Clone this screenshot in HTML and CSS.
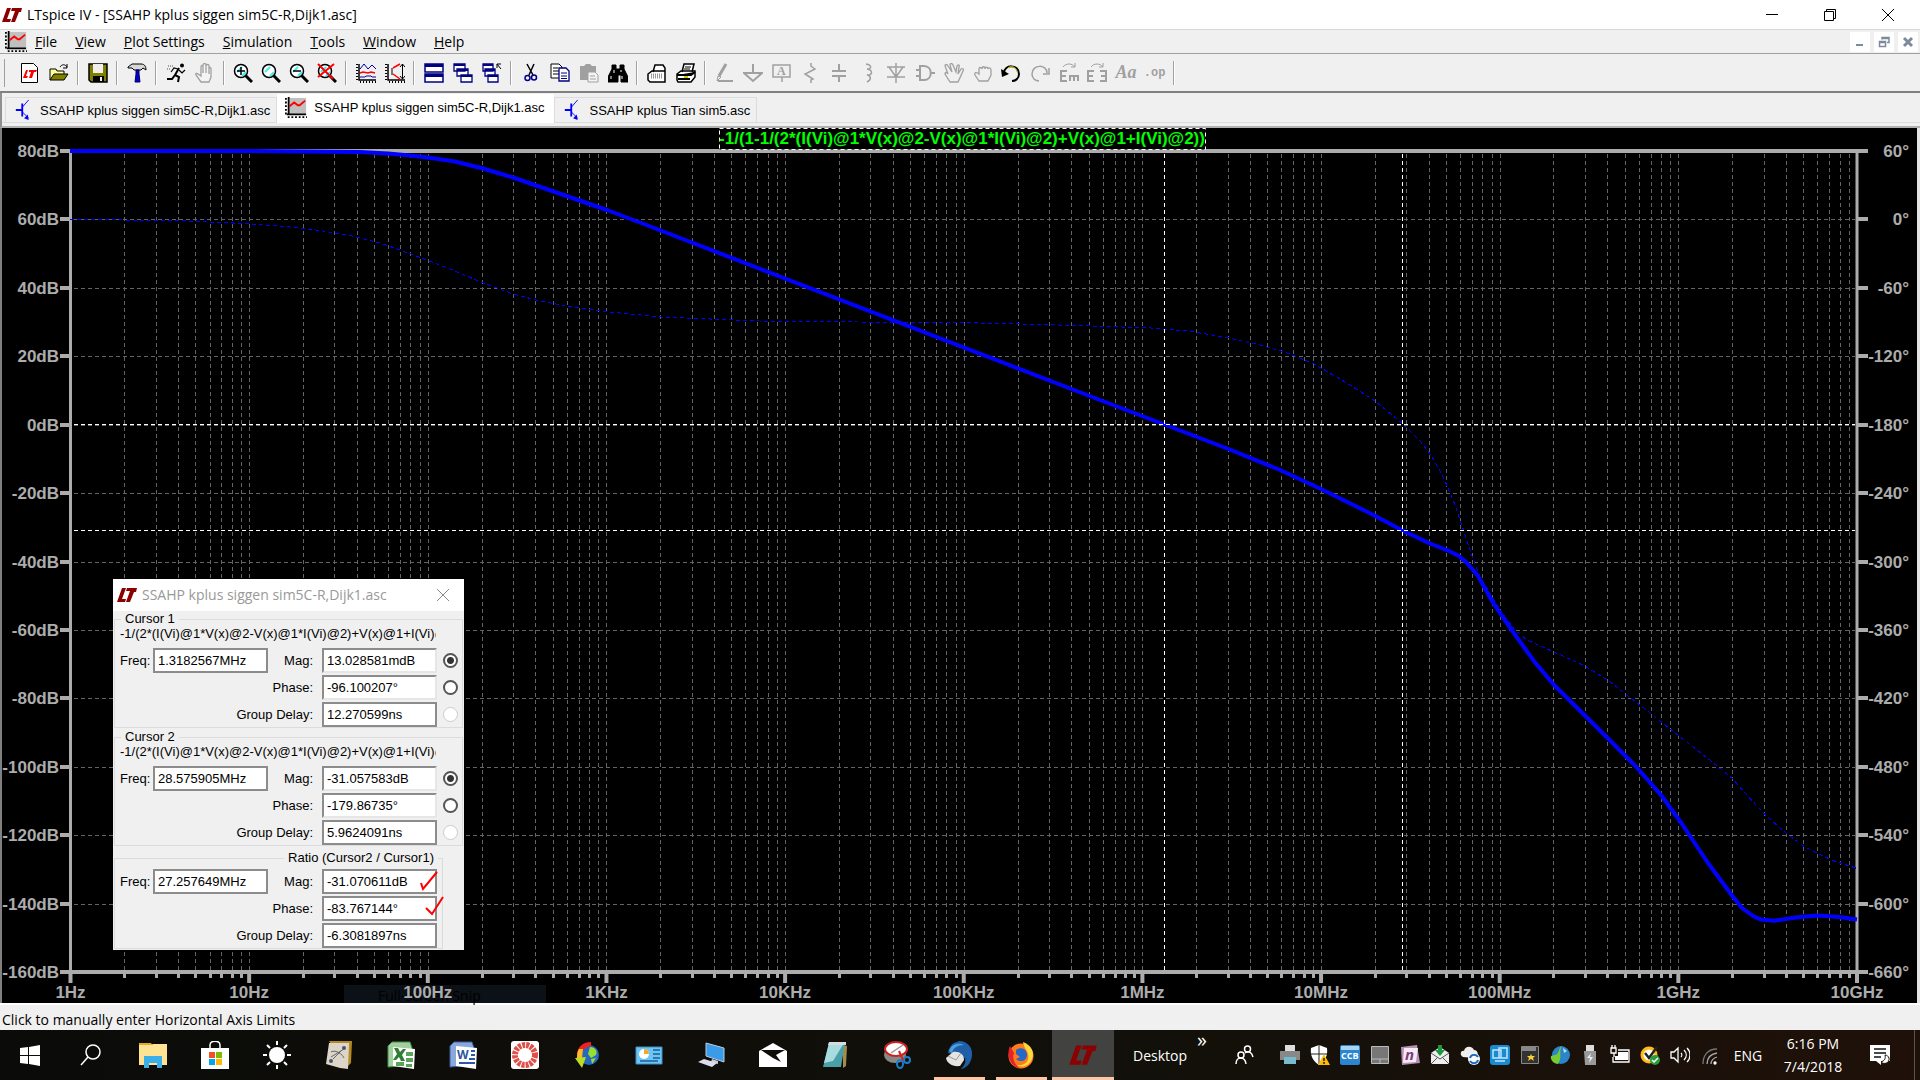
FILE: index.html
```html
<!DOCTYPE html>
<html lang="en">
<head>
<meta charset="utf-8">
<title>LTspice IV - [SSAHP kplus siggen sim5C-R,Dijk1.asc]</title>
<link rel="stylesheet" href="styles.css">
</head>
<body>
<svg class="defs" aria-hidden="true">
  <symbol id="lt" viewBox="0 0 20 16"><path fill="#8b0000" d="M5 1h4L5 12h4l-1 3H0zM10 1h10l-1 4h-2l-4 10H9l4-11H9z"/></symbol>
  <symbol id="wave" viewBox="0 0 24 24"><path fill="#c0c0c0" d="M5 1h18v18H5z"/><path stroke="#000" stroke-width="2" d="M4 0v20M2 19h21"/><path stroke="#000" stroke-width="2" stroke-dasharray="2 2" d="M1 1v20M3 22h21"/><path fill="none" stroke="#f00" stroke-width="2" d="M5 10l5-4 4 3h2l6-5"/></symbol>
  <symbol id="bjt" viewBox="0 0 20 24"><path fill="none" stroke="#00f" stroke-width="2" d="M0 12h7M7 5v14"/><path fill="none" stroke="#00f" d="M7 9l7-8M7 14l7 7"/><path fill="#00f" d="M14 23l-5-2 4-4z"/></symbol>
  <symbol id="lens" viewBox="0 0 20 20"><path d="M12 12l7 7" stroke="#000" stroke-width="3"/><circle cx="8" cy="8" r="6.500" fill="#fff" stroke="#000" stroke-width="1.500"/><path d="M4 9l5-5M9 13l4-4" stroke="#4ee" stroke-width="2"/></symbol>
  <symbol id="hand" viewBox="0 0 20 20"><path fill="#f4f4f4" stroke="#a0a0a0" stroke-width="1.300" d="M6 19l-5-7c-1-2 1-2 2-1l3 2V4c0-2 2-2 2 0v6V2c0-2 3-2 3 0v8V3c0-2 3-2 3 0v8V6c0-2 2-2 2 0v8l-2 5z"/></symbol>
</svg>

<header class="titlebar">
  <svg class="ico-title"><use href="#lt"/></svg>
  <h1>LTspice IV - [SSAHP kplus siggen sim5C-R,Dijk1.asc]</h1>
  <div class="winbtns">
    <button aria-label="Minimize"><svg viewBox="0 0 12 12"><path d="M0 5.500h12"/></svg></button>
    <button aria-label="Restore"><svg viewBox="0 0 12 12"><path d="M.5 2.500h9v9h-9zM2.500 2V.5h9v9H10"/></svg></button>
    <button aria-label="Close"><svg viewBox="0 0 12 12"><path d="M0 0l12 12M12 0L0 12"/></svg></button>
  </div>
</header>

<nav class="menubar">
  <svg class="ico-menu"><use href="#wave"/></svg>
  <button><u>F</u>ile</button><button><u>V</u>iew</button><button><u>P</u>lot Settings</button><button><u>S</u>imulation</button><button><u>T</u>ools</button><button><u>W</u>indow</button><button><u>H</u>elp</button>
  <div class="mdibtns">
    <button aria-label="Minimize document"><svg viewBox="0 0 12 12"><path stroke-width="2" d="M2 9h7"/></svg></button>
    <button aria-label="Restore document"><svg viewBox="0 0 12 12"><path d="M1.500 5.500h6v5h-6zM1 6.500h7M4 3.500V1.500h7v5H9M4 2.500h7"/></svg></button>
    <button aria-label="Close document"><svg viewBox="0 0 12 12"><path stroke-width="3" d="M2 2l8 8M10 2l-8 8"/></svg></button>
  </div>
</nav>

<div class="toolbar">
  <div class="tools">
    <button aria-label="New schematic"><svg viewBox="0 0 20 20"><path fill="#fff" stroke="#000" d="M1.500 .5h12l4 4v15h-16z"/><path fill="#f00" d="M6 7h2l-2 6h2l-1 2H3zM9 7h8l-1 2h-2l-2 6H9l2-6H9z"/></svg></button>
    <button aria-label="Open"><svg viewBox="0 0 20 20"><path fill="#ff9" stroke="#000" d="M1 17V6h6l1 2h7v3"/><path fill="#808000" stroke="#000" d="M1 17l4-6h14l-4 6z"/><path fill="none" stroke="#000" d="M11 4c2-3 5-3 7 0M18 1v4h-4"/></svg></button>
  </div><i></i>
  <div class="tools">
    <button aria-label="Save"><svg viewBox="0 0 20 20"><path fill="#808000" stroke="#000" stroke-width="1.500" d="M1 1h18v18H3l-2-2z"/><path fill="#efefef" d="M5 1h10v9H5z"/><path d="M5 13h11v6H5z"/><path fill="#efefef" d="M12 14h2v4h-2z"/></svg></button>
  </div><i></i>
  <div class="tools">
    <button aria-label="Control panel"><svg viewBox="0 0 20 20"><path fill="#d8d8d8" stroke="#000" d="M1 4l4-3h9c4 0 5 3 5 6l-3-2-2 2H7L5 5H1z"/><path fill="#00c" stroke="#006" d="M9 7h3v4l1 8H8l1-8z"/></svg></button>
  </div><i></i>
  <div class="tools">
    <button aria-label="Run"><svg viewBox="0 0 20 20"><circle cx="16" cy="2.500" r="2"/><path fill="none" stroke="#000" stroke-width="2" d="M13 5l-4 7 4 2-1 5M9 12l-3 4H1"/><path fill="none" stroke="#000" stroke-width="1.200" d="M12 6L8 5 5 9M13 7l3 3 3-3"/><path stroke="#555" stroke-dasharray="1 1" d="M2 3h6M1 6h4"/></svg></button>
    <button aria-label="Halt"><svg><use href="#hand"/></svg></button>
  </div><i></i>
  <div class="tools tools-tight">
    <button aria-label="Zoom in"><svg viewBox="0 0 20 20"><use href="#lens"/><path stroke="#000" stroke-width="1.500" d="M8 4v8M4 8h8"/></svg></button>
    <button aria-label="Pan"><svg><use href="#lens"/></svg></button>
    <button aria-label="Zoom out"><svg viewBox="0 0 20 20"><use href="#lens"/><path stroke="#000" stroke-width="1.500" d="M4 8h8"/></svg></button>
    <button aria-label="Zoom fit"><svg viewBox="0 0 20 20"><use href="#lens"/><path stroke="#f00" stroke-width="2" d="M1 1l15 15M17 1L1 14"/></svg></button>
  </div><i></i>
  <div class="tools">
    <button aria-label="Plot panes"><svg viewBox="0 0 20 20" fill="none"><path stroke="#000" stroke-width="1.500" d="M3 1v16h17"/><path stroke="#000" stroke-dasharray="1 2" stroke-width="2" d="M1 1v16M4 19h16"/><path stroke="#00a" d="M4 6l4-5 4 5 4-4 4 4M4 14h5l1-1h5l1 1h4"/><path stroke="#f00" stroke-width="1.500" d="M4 10l3-1 5 1 3-1 4 1"/></svg></button>
    <button aria-label="Autorange"><svg viewBox="0 0 20 20" fill="none"><path stroke="#000" stroke-width="1.500" d="M3 1v16h17"/><path stroke="#000" stroke-dasharray="1 2" stroke-width="2" d="M1 1v16M4 19h16"/><path stroke="#f00" stroke-width="1.500" d="M15 1L8 5M8 11l7 5"/><path stroke="#000" d="M17.500 1v15M15 4l2.500-3L20 4M15 13l2.500 3 2.500-3M7 5v7"/></svg></button>
  </div><i></i>
  <div class="tools">
    <button aria-label="Tile"><svg viewBox="0 0 20 20"><path fill="#fff" stroke="#000080" stroke-width="1.500" d="M1 1h18v8H1zM1 11h18v8H1z"/><path fill="#000080" d="M1 1h18v3H1zM1 11h18v3H1z"/></svg></button>
    <button aria-label="Cascade"><svg viewBox="0 0 20 20"><g fill="#fff" stroke="#000080" stroke-width="1.300"><path d="M1 1h11v7H1zM4 6h11v7H4zM8 12h11v7H8z"/><path stroke-width="2" d="M1 2h11M4 7h11M8 13h11"/></g></svg></button>
    <button aria-label="Close all"><svg viewBox="0 0 20 20"><g fill="#fff" stroke="#000080" stroke-width="1.300"><path d="M1 1h10v7H1zM3 6h10v7H3zM6 12h10v7H6z"/><path stroke-width="2" d="M1 2h10M3 7h10M6 13h10"/></g><path fill="none" stroke="#000" d="M19 6l-4-5M15 5V1h4"/></svg></button>
  </div><i></i>
  <div class="tools">
    <button aria-label="Cut"><svg viewBox="0 0 20 20"><path stroke="#000" stroke-width="1.500" d="M6 1l6 11M13 1L8 12"/><g fill="none" stroke="#00008b" stroke-width="1.500"><circle cx="6.500" cy="15" r="2.500"/><circle cx="13" cy="14.500" r="2.500"/></g></svg></button>
    <button aria-label="Copy"><svg viewBox="0 0 20 20"><path fill="#fff" stroke="#000" d="M1 1h8l3 3v11H1z"/><path stroke="#000" d="M3 5h5M3 8h6M3 11h6"/><path fill="#fff" stroke="#000080" stroke-width="1.300" d="M9 5h7l3 3v10H9z"/><path stroke="#000080" d="M11 10h6M11 13h6M11 15.500h6"/></svg></button>
    <button aria-label="Paste"><svg viewBox="0 0 20 20"><path fill="#a0a0a0" d="M1 3h4l2-2h4l2 2h4v14H1z"/><path fill="#f4f4f4" stroke="#a0a0a0" d="M9 9h7l3 3v7H9z"/><path stroke="#a0a0a0" d="M11 13h5M11 16h6"/></svg></button>
    <button aria-label="Find"><svg viewBox="0 0 20 20"><path d="M4 2h4v4h4V2h4v4l4 8v5h-7v-7h-3v7H0v-5l4-8z" stroke="#000"/><path stroke="#fff" d="M3 13v3M14 13v3M6 7v3M13 7v2"/></svg></button>
  </div><i></i>
  <div class="tools">
    <button aria-label="Print setup"><svg viewBox="0 0 20 20"><path fill="#fff" stroke="#000" stroke-width="1.500" d="M6 9l2-7h8l2 3v5M1 11l4-3h13v11H3l-2-2z"/><path stroke="#999" stroke-dasharray="1 1" stroke-width="5" d="M4 13h12"/></svg></button>
    <button aria-label="Print"><svg viewBox="0 0 20 20"><path fill="#fff" stroke="#000" stroke-width="1.500" d="M6 9l2-8h10l-2 8M1 11l4-3h14v6l-4 5H2l-1-2z"/><path stroke="#000" d="M9 4h6M8 6h6"/><path stroke="#000" stroke-width="2" d="M1 12h14l4-3M2 16h12"/><path stroke="#cc0" stroke-width="2" d="M8 14h4"/></svg></button>
  </div><i></i>
  <div class="tools tools-edit">
    <button disabled aria-label="Wire"><svg viewBox="0 0 20 20"><path stroke-width="3" d="M12 1L5 13"/><path d="M3 18l1-5 3 1z"/><path stroke-width="2" d="M4 18h15"/></svg></button>
    <button disabled aria-label="Ground"><svg viewBox="0 0 20 20"><path stroke-width="2" d="M10 1v9M1 10h18l-9 8z"/></svg></button>
    <button disabled aria-label="Label net"><svg viewBox="0 0 20 20"><path d="M1 2h17v12H1zM10 14v5" stroke-width="1.500"/><text x="5" y="12">A</text></svg></button>
    <button disabled aria-label="Resistor"><svg viewBox="0 0 20 20"><path d="M11 0v3l4 3-10 5 8 5-2 1v3" stroke-width="1.500"/></svg></button>
    <button disabled aria-label="Capacitor"><svg viewBox="0 0 20 20"><path stroke-width="2" d="M10 1v7M3 8h14M3 13h14M10 13v6"/></svg></button>
    <button disabled aria-label="Inductor"><svg viewBox="0 0 20 20"><path stroke-width="1.500" d="M8 1c6 1 6 5 1 5 6 1 6 6 0 6 5 1 4 5 0 7"/></svg></button>
    <button disabled aria-label="Diode"><svg viewBox="0 0 20 20"><path stroke-width="1.500" d="M10 0v20M1 4h18M3 4l7 10 7-10M1 14h18"/></svg></button>
    <button disabled aria-label="Component"><svg viewBox="0 0 20 20"><path stroke-width="2" d="M5 3v14h4c9 0 9-14 0-14zM1 7h4M1 13h4M16 10h4"/></svg></button>
    <button disabled aria-label="Move"><svg viewBox="0 0 20 20"><path stroke-width="1.300" d="M6 19l-5-8c0-2 2-2 3 0L1 3c0-2 2-2 3 0l4 6-2-7c0-2 2-2 3 0l3 7 1-6c1-2 3-1 2 1l-1 7 3-5c2-1 3 0 2 2l-5 11z"/></svg></button>
    <button disabled aria-label="Drag"><svg viewBox="0 0 20 20"><path stroke-width="1.300" d="M6 18l-4-6c-1-3 2-3 4-1V6c0-2 2-2 3 0 0-3 3-3 3 0 0-3 3-2 3 0 1-2 3-1 3 1v5l-3 6z"/></svg></button>
    <button aria-label="Undo"><svg viewBox="0 0 20 20"><path fill="none" stroke="#000" stroke-width="2" d="M3 10c0-9 15-9 15 1 0 5-4 7-7 7"/><path stroke="#cc0" d="M6 6c3-4 9-3 10 3" fill="none"/><path d="M0 6l1 8 7-3z"/></svg></button>
    <button disabled aria-label="Redo"><svg viewBox="0 0 20 20"><path stroke-width="1.500" d="M17 10c0-9-15-9-15 1 0 5 4 7 7 7M19 5v6h-6"/></svg></button>
    <button disabled aria-label="Mirror"><svg viewBox="0 0 20 20"><path stroke-width="2" d="M8 8H2v10h6M2 13h5M11 18v-5h8v5M15 13v5"/><path d="M4 4c3-4 9-4 12 0M16 0v4h-4"/></svg></button>
    <button disabled aria-label="Rotate"><svg viewBox="0 0 20 20"><path stroke-width="2" d="M7 8H1v10h6M1 13h5M13 8h6v10h-6M19 13h-5"/><path d="M4 4c3-4 9-4 12 0M16 0v4h-4"/></svg></button>
    <button disabled class="aa">Aa</button>
    <button disabled class="op">.op</button>
  </div><i></i>
</div>

<div class="tabs">
  <button class="tab"><svg class="ico-bjt"><use href="#bjt"/></svg>SSAHP kplus siggen sim5C-R,Dijk1.asc</button>
  <button class="tab active"><svg class="ico-wave"><use href="#wave"/></svg>SSAHP kplus siggen sim5C-R,Dijk1.asc</button>
  <button class="tab"><svg class="ico-bjt"><use href="#bjt"/></svg>SSAHP kplus Tian sim5.asc</button>
</div>

<main class="plot">
  <div class="ghost">Full-screen Snip</div>
  <svg id="chart" viewBox="2 128 1915 875" role="img" aria-label="Loop gain magnitude and phase against frequency">
    <g id="grid" class="grid"></g>
    <g id="axes" class="axes"></g>
    <path class="phase" d="M70 219.500L122 220L187 221L245 223.500L286 226.500L320 230.500L350 235.500L380 243L400 250L428 260.500L455 271L482 282.500L513 294L540 301L570 306.500L600 311L661 317L759 321L857 322L980 323L1078 325.500L1151 328L1188 331L1224 337L1256 344L1286 352.500L1312 363L1342 380L1375 401L1403 424L1420 441L1432 456.500L1443.500 477.600L1454 502.500L1463 528.500L1472 556L1480 577L1501 611.500L1514 629L1527 640L1554 652L1585 666L1609 681L1645 709L1679 736L1711 761L1733 779L1745 793L1766 815.500L1787 834L1805 847L1831.500 860L1857 868.500"/>
    <path class="mag" d="M70 151H247L360 152L388 153.500L410 155.500L428 157.500L455 161.500L483 168.500L513 177.500L555 192L607 210L640 222.500L1100 400L1164.500 424.500L1231 450L1280 470L1321 489L1373 514.700L1402.500 530.500L1430 543.500L1449 551L1459 556L1467 563L1478 576L1493 602.700L1512 630.700L1535 662.400L1554 685L1595.500 726L1635 765.500L1661 795L1682 824L1708 863L1732 895.500L1742 908L1753 916L1761 919.600L1774 920.800L1797 917.300L1818 915.400L1839 917L1857 919.600"/>
    <g class="cursor"><path d="M74 424.500H1855M74 530.500H1855M1164.500 154V970M1402.500 154V970"/></g>
    <rect x="719.500" y="128.500" width="486" height="21" class="legend-box"/>
    <text x="962" y="144" class="legend" text-anchor="middle">-1/(1-1/(2*(I(Vi)@1*V(x)@2-V(x)@1*I(Vi)@2)+V(x)@1+I(Vi)@2))</text>
  </svg>

  <section class="dialog" role="dialog" aria-label="Cursor readout">
    <header>
      <svg class="ico-title"><use href="#lt"/></svg>
      <h2>SSAHP kplus siggen sim5C-R,Dijk1.asc</h2>
      <button aria-label="Close readout"><svg viewBox="0 0 12 12"><path d="M0 0l12 12M12 0L0 12"/></svg></button>
    </header>
    <fieldset>
      <legend>Cursor 1</legend>
      <p>-1/(2*(I(Vi)@1*V(x)@2-V(x)@1*I(Vi)@2)+V(x)@1+I(Vi)@2)</p>
      <div class="rows">
        <label for="f1">Freq:</label><input id="f1" value="1.3182567MHz">
        <label for="m1" class="r">Mag:</label><input id="m1" class="sunk" value="13.028581mdB"><input type="radio" name="c1" aria-label="Cursor 1 magnitude" checked>
        <label for="p1" class="wide">Phase:</label><input id="p1" class="sunk" value="-96.100207°"><input type="radio" name="c1" aria-label="Cursor 1 phase">
        <label for="g1" class="wide">Group Delay:</label><input id="g1" value="12.270599ns"><input type="radio" name="c1" aria-label="Cursor 1 group delay" disabled>
      </div>
    </fieldset>
    <fieldset>
      <legend>Cursor 2</legend>
      <p>-1/(2*(I(Vi)@1*V(x)@2-V(x)@1*I(Vi)@2)+V(x)@1+I(Vi)@2)</p>
      <div class="rows">
        <label for="f2">Freq:</label><input id="f2" value="28.575905MHz">
        <label for="m2" class="r">Mag:</label><input id="m2" class="sunk" value="-31.057583dB"><input type="radio" name="c2" aria-label="Cursor 2 magnitude" checked>
        <label for="p2" class="wide">Phase:</label><input id="p2" class="sunk" value="-179.86735°"><input type="radio" name="c2" aria-label="Cursor 2 phase">
        <label for="g2" class="wide">Group Delay:</label><input id="g2" value="5.9624091ns"><input type="radio" name="c2" aria-label="Cursor 2 group delay" disabled>
      </div>
    </fieldset>
    <fieldset class="ratio">
      <legend>Ratio (Cursor2 / Cursor1)</legend>
      <div class="rows">
        <label for="f3">Freq:</label><input id="f3" value="27.257649MHz">
        <label for="m3" class="r">Mag:</label><input id="m3" value="-31.070611dB">
        <label for="p3" class="wide">Phase:</label><input id="p3" value="-83.767144°">
        <label for="g3" class="wide">Group Delay:</label><input id="g3" value="-6.3081897ns">
      </div>
    </fieldset>
    <svg class="marks" viewBox="0 0 26 46"><path d="M2 12l2 6L18 1M7 37l6 6L24 26"/></svg>
  </section>
</main>

<footer class="status">Click to manually enter Horizontal Axis Limits</footer>

<div class="taskbar">
  <button class="start" aria-label="Start"><svg viewBox="0 0 28 28"><path fill="#fff" d="M4 7l8-1v8H4zM13 6l11-2v10H13zM4 15h8v8l-8-1zM13 15h11v10l-11-2z"/></svg></button>
  <button aria-label="Search"><svg viewBox="0 0 28 28" fill="none" stroke="#fff" stroke-width="1.500"><circle cx="16" cy="11" r="7"/><path d="M11 16l-7 8"/></svg></button>
  <button aria-label="File Explorer"><svg viewBox="0 0 28 28"><path fill="#e8a820" d="M0 2h12l2 3H0z"/><path fill="#ffe394" d="M0 4h12l2-1h14v21H0z"/><path fill="#3bb0e8" d="M5 27V15h18v12h-5v-5h-8v5z"/></svg></button>
  <button aria-label="Store"><svg viewBox="0 0 28 28"><path fill="none" stroke="#fff" stroke-width="1.500" d="M9 8V4c0-5 10-5 10 0v4"/><path fill="#fff" d="M0 7h28v21H0z"/><path fill="#f25022" d="M8 11h6v6H8z"/><path fill="#7fba00" d="M15 11h6v6h-6z"/><path fill="#00a4ef" d="M8 18h6v6H8z"/><path fill="#ffb900" d="M15 18h6v6h-6z"/></svg></button>
  <button aria-label="Weather"><svg viewBox="0 0 28 28"><circle cx="14" cy="14" r="8" fill="#fff"/><path stroke="#fff" stroke-width="2" d="M14 0v4M14 24v4M0 14h4M24 14h4M4 4l3 3M21 21l3 3M24 4l-3 3M4 24l3-3"/></svg></button>
  <button aria-label="Sketch"><svg viewBox="0 0 28 28"><path fill="#b58a20" d="M4 0h23l-1 22-4 4z"/><path fill="#ddd6c8" d="M4 2h20l-1 26-8-1-14-4z"/><path fill="none" stroke="#666" d="M6 11c5-3 12 3 13 6M6 16l13-8M8 18l8-8"/><circle cx="19" cy="7" r="2" fill="#457"/><circle cx="6" cy="20" r="2" fill="#457"/></svg></button>
  <button aria-label="Excel"><svg viewBox="0 0 28 28"><path fill="#a3cfa0" stroke="#3d9440" d="M1 26V5l4-4h18l2 6v17z"/><path fill="#fff" d="M6 6l22 2-1 20-21-3z"/><path fill="#2f7d32" d="M7 7h4l2 4 3-3h3l-4 6 3 6h-4l-2-4-3 3H6l4-6z"/><path fill="#58a55a" d="M19 11h7v4h-7zM19 17h7v4h-7zM9 21h8v4H9zM19 23h6v3h-6z"/></svg></button>
  <button aria-label="Word"><svg viewBox="0 0 28 28"><path fill="#8ba8da" stroke="#3a5fa8" d="M1 26V5l4-4h18l2 6v17z"/><path fill="#fff" d="M7 5l21 2-1 21-20-3z"/><text x="8" y="18" font-size="12" font-weight="700" fill="#2b579a">W</text><path stroke="#2b57a8" stroke-width="2" d="M22 10h4M22 14h4M20 18h6M10 22h16"/></svg></button>
  <button aria-label="Recorder"><svg viewBox="0 0 28 28"><rect width="28" height="28" rx="3" fill="#fff"/><circle cx="14" cy="14" r="10" fill="none" stroke="#e0504a" stroke-width="6" stroke-dasharray="3 1"/></svg></button>
  <button aria-label="Globe"><svg viewBox="0 0 28 28"><circle cx="16" cy="14" r="10" fill="#2568c0"/><path fill="#9d3" d="M17 6c5 0 8 4 6 8l-5 3-3-4zM18 18l5-1-4 6z"/><path fill="#e22" d="M18 1C9 1 4 7 4 14l5-1c0-4 4-7 9-8z"/><path fill="#fb2" d="M6 8c-2 3-2 6-2 10l5-1 1-9z"/><path fill="#bd2" d="M2 17l11-1-4 11z"/></svg></button>
  <button aria-label="Control Panel"><svg viewBox="0 0 28 28"><path fill="#6cc5f2" stroke="#3a8fc8" d="M1 6h26v17H1z"/><circle cx="9" cy="13" r="5" fill="#fff"/><path fill="#f6a623" d="M9 8v5h5a5 5 0 0 0-5-5z"/><path stroke="#1c5e96" stroke-width="1.500" d="M18 9h7M18 13h7M18 17h7M5 20h18"/></svg></button>
  <button aria-label="Computer"><svg viewBox="0 0 28 28"><path fill="#3a9be8" stroke="#bcd" d="M9 2l18 5v14L9 15z"/><path fill="#ccd" d="M15 18l6 2v3l-7-2z"/><path fill="#dde" d="M1 21l6-3 13 4-5 4z"/></svg></button>
  <button aria-label="Mail"><svg viewBox="0 0 28 28"><path fill="#fff" d="M14 2l14 8v16H0V10z"/><path fill="#0e0d08" d="M2 9h24l-9 5 5 7-8-4z"/></svg></button>
  <button aria-label="Notepad"><svg viewBox="0 0 28 28"><path fill="#a68c4a" d="M22 4l4 1-1 20-3 2z"/><path fill="#4aa0a8" d="M8 2h16l-4 24H2z"/><path fill="#a8dbe0" d="M8 2h15L12 20l-9 2z"/><path fill="#d5dbe0" d="M8 1h17v3H7z"/></svg></button>
  <button aria-label="Snipping Tool"><svg viewBox="0 0 28 28"><ellipse cx="12" cy="14" rx="11" ry="8" fill="#888"/><ellipse cx="13" cy="8" rx="11" ry="7" fill="#fff" stroke="#c22" stroke-width="2"/><path stroke="#999" stroke-width="1.500" d="M8 12l12-8"/><g fill="none" stroke="#1a7ec8" stroke-width="2"><ellipse cx="17" cy="23" rx="3" ry="4"/><ellipse cx="24" cy="19" rx="3" ry="3"/></g><path stroke="#c22" stroke-width="2" d="M16 10l4 9"/></svg></button>
  <button class="open" aria-label="Thunderbird"><svg viewBox="0 0 28 28"><path fill="#1e5fa8" d="M12 1l2-1c9 0 14 7 13 15-1 7-5 12-11 13 4-4 5-7 4-11L3 12C4 6 7 2 12 1z"/><path fill="#4da0e0" d="M4 10C6 3 14 1 19 4 12 4 8 7 7 12z"/><path fill="#e6e4e0" d="M1 17l7-6c6-1 11 2 11 8l-4 6C7 26 2 22 1 17z"/><path fill="none" stroke="#999" d="M3 15l8 4 5-7"/></svg></button>
  <button class="open" aria-label="Firefox"><svg viewBox="0 0 28 28"><circle cx="14" cy="15" r="12.500" fill="#ff7a1a"/><path fill="#ffd93b" d="M16 1c8 3 12 10 9 17-3 8-11 9-15 6 8 1 13-4 11-11-1-4-4-6-5-12z"/><path fill="#e3222e" d="M3 5c-4 9 0 20 9 22C7 22 5 17 7 12z"/><path fill="#2468c8" d="M9 9c5-4 11-1 11 5s-7 8-11 4l4-2-4-3z"/></svg></button>
  <button class="current" aria-label="LTspice"><svg viewBox="0 0 28 28"><use href="#lt" y="3" width="28" height="22"/></svg></button>
  <span class="desk">Desktop</span><span class="more">»</span>
  <div class="tray">
    <button class="people" aria-label="People"><svg viewBox="0 0 20 20" fill="none" stroke="#fff" stroke-width="1.500"><circle cx="12.500" cy="4" r="3"/><circle cx="6" cy="10" r="3"/><path d="M1 19c0-8 9-8 10 0M10 8c4-3 7 0 8 4"/></svg></button>
    <button aria-label="Printer"><svg viewBox="0 0 20 20"><path fill="#ddd" d="M5 0h10v6H5z"/><path fill="#888" d="M0 6h20v9H0z"/><path fill="#7bc" d="M4 12h12v7H4z"/></svg></button>
    <button aria-label="Defender"><svg viewBox="0 0 20 20"><path fill="#fff" d="M9 0l8 3c1 8-2 13-8 17C3 16 0 11 1 3z"/><path stroke="#222" d="M9 0v19M1 9h16"/><path fill="#fb0" d="M14 9l6 11H8z"/><path stroke="#222" stroke-width="1.500" d="M14 13v3M14 17v2"/></svg></button>
    <button aria-label="CCB"><svg viewBox="0 0 20 20"><rect width="20" height="20" rx="2" fill="#2b86cf"/><path fill="#a8d4f0" d="M1 1h18v4H1z"/><text x="1" y="14" font-size="9" font-weight="700" fill="#fff">CCB</text></svg></button>
    <button aria-label="Touchpad"><svg viewBox="0 0 20 20"><path fill="#777" stroke="#bbb" d="M1.500 1.500h17v17h-17zM1 14h18M10 14v5"/></svg></button>
    <button aria-label="OneNote"><svg viewBox="0 0 20 20"><path fill="#b58fb8" d="M1 2l16-2 3 18-18 2z"/><path fill="#f3eaf3" d="M4 3h14l-2 14-13 1z"/><text x="5" y="15" font-size="15" font-weight="700" font-style="italic" fill="#80397b">n</text></svg></button>
    <button aria-label="Mail download"><svg viewBox="0 0 20 20"><path fill="#eee" d="M1 8l9-6 9 6v11H1z"/><path fill="none" stroke="#555" d="M1 8l9 6 9-6M1 19l7-7M19 19l-7-7"/><path fill="#1a9a3a" d="M8 0h4v5h3l-5 6-5-6h3z"/></svg></button>
    <button aria-label="Cloud sync"><svg viewBox="0 0 20 20"><path fill="#eee" d="M3 12c-4-2-2-7 1-6 1-6 9-5 10-1 5 0 5 8 0 8z"/><circle cx="14" cy="14" r="6" fill="#fff"/><path fill="none" stroke="#1769c8" stroke-width="2" d="M10 13c1-4 6-4 8-1M18 15c-1 4-6 4-8 1"/></svg></button>
    <button aria-label="Graphics"><svg viewBox="0 0 20 20"><rect width="20" height="20" rx="3" fill="#1a8bd0"/><path fill="none" stroke="#bfe6ff" stroke-width="1.500" d="M3 5h8v8H3zM9 3h8v10H9zM5 16h10"/></svg></button>
    <button aria-label="Disc"><svg viewBox="0 0 20 20"><path fill="#333" stroke="#888" d="M1.500 1.500h17v17h-17z"/><path fill="#888" d="M2 2h14v4H2z"/><path fill="#fc3" d="M11 9l1 2h3l-2 2 1 3-3-2-3 2 1-3-2-2h3z"/></svg></button>
    <button aria-label="Network sync"><svg viewBox="0 0 20 20"><circle cx="11" cy="10" r="9" fill="#2a86c8"/><path fill="#7c3" d="M12 1c-4 6 1 10-4 18-4 0-8-4-7-8l4-1c5-1 3-7 7-9z"/><path fill="#bdf" d="M13 3l4 3-3 2z"/></svg></button>
    <button aria-label="USB"><svg viewBox="0 0 20 20"><path fill="#ddd" d="M6 0h8v6H6z"/><path fill="#999" d="M4 6h12v14H5z"/><path fill="#eee" d="M11 8l-4 5h3l-1 5 4-6h-3z"/></svg></button>
    <button aria-label="Battery"><svg viewBox="0 0 20 20"><path fill="#fff" d="M8 7h10v8H5v-4h3z"/><path fill="none" stroke="#fff" stroke-width="1.300" d="M8 5h11v12H3v-5M1 3h5v5H1zM2 0v3M5 0v3M4 8v4"/></svg></button>
    <button aria-label="Norton"><svg viewBox="0 0 20 20"><circle cx="9" cy="10" r="7" fill="#fff" stroke="#fb1" stroke-width="3"/><path fill="none" stroke="#222" stroke-width="2.500" d="M5 8l4 5 8-11"/><circle cx="15" cy="15" r="5" fill="#2a9a3a"/><path fill="none" stroke="#fff" stroke-width="1.500" d="M12 15l2 2 4-4"/></svg></button>
    <button aria-label="Volume"><svg viewBox="0 0 20 20" fill="none" stroke="#fff" stroke-width="1.300"><path d="M1 7h3l4-4v14l-4-4H1zM11 8c1 1 1 3 0 4M14 5c3 3 3 7 0 10M17 3c4 4 4 10 0 14"/></svg></button>
    <button aria-label="Wi-Fi"><svg viewBox="0 0 20 20" fill="none" stroke="#aaa" stroke-width="1.300"><path stroke="#777" d="M3 19C3 10 8 4 17 4"/><path d="M7 19c0-7 4-10 10-11M11 19c0-4 3-6 6-7"/><circle cx="15" cy="18" r="1" fill="#fff" stroke="#fff"/></svg></button>
    <span class="lang">ENG</span>
    <time class="clock"><span>6:16 PM</span><span>7/4/2018</span></time>
    <button class="action" aria-label="Notifications"><svg viewBox="0 0 20 20"><path fill="#fff" d="M0 0h20v16h-9v4l-5-4H0z"/><path stroke="#111" stroke-width="1.500" d="M4 4h12M4 8h12M4 12h7"/><path fill="#fff" stroke="#111" d="M15 10c1 4-1 6-4 7 3 3 9 1 8-4-1-2-2-3-4-3z"/></svg></button>
  </div>
</div>
<script src="chart.js"></script>
</body>
</html>
```
FILE: styles.css
```css
* { box-sizing: border-box; }
body {
  margin: 0;
  min-height: 100vh;
  display: flex;
  flex-direction: column;
  background: #f0f0f0;
  color: #000;
  font-family: "Open Sans", "Noto Sans", sans-serif;
  font-size: 14px;
}
button {
  border: 0;
  padding: 0;
  background: none;
  color: inherit;
  font: inherit;
}
h1, h2, p { margin: 0; font-weight: 400; }
.defs { position: absolute; width: 0; height: 0; }

/* title and menu */
.titlebar {
  height: 29px;
  background: #fff;
  display: flex;
  align-items: center;
  padding: 0 3px 0 2px;
}
.titlebar h1 { font-size: 14px; line-height: 20px; }
.ico-title { width: 20px; height: 16px; margin-right: 5px; }
.winbtns { margin-left: auto; display: flex; }
.winbtns button { width: 58px; height: 28px; display: grid; place-items: center; }
.winbtns svg, .dialog header button svg { width: 12px; height: 12px; fill: none; stroke: #000; }
.menubar {
  height: 25px;
  border-top: 1px solid #d8d8d8;
  border-bottom: 1px solid #a0a0a0;
  display: flex;
  align-items: center;
  padding-left: 4px;
  font-size: 14px;
}
.ico-menu { width: 24px; height: 22px; }
.menubar > button { padding: 0 9px; height: 22px; line-height: 20px; }
.menubar > button:first-of-type { padding-left: 7px; }
.mdibtns { margin-left: auto; display: flex; gap: 4px; padding-right: 2px; }
.mdibtns button { width: 20px; height: 20px; background: #fff; display: grid; place-items: center; }
.mdibtns svg { width: 12px; height: 12px; fill: none; stroke: #7c8a9c; stroke-width: 1.5; }

/* toolbar */
.toolbar {
  height: 39px;
  border-bottom: 2px solid #808080;
  display: flex;
  align-items: center;
  padding-left: 4px;
}
.toolbar::before { content: ""; width: 1px; height: 28px; background: #a0a0a0; margin-right: 10px; }
.toolbar > i { width: 2px; height: 24px; margin: 0 4px; background: #a0a0a0; border-right: 1px solid #fff; }
.tools { display: grid; grid-auto-flow: column; grid-auto-columns: 29px; }
.tools-tight { grid-auto-columns: 28px; }
.tools-edit { width: 459px; grid-auto-columns: 1fr; }
.tools button { height: 28px; display: grid; place-items: center; }
.tools svg { width: 20px; height: 20px; }
.tools-edit button:disabled svg { fill: none; stroke: #a0a0a0; }
.tools-edit svg text { font: 700 12px "Liberation Serif", serif; fill: #a0a0a0; stroke: none; }
.tools-edit .aa { font: italic 700 18px "Liberation Serif", serif; color: #a0a0a0; }
.tools-edit .op { font: 700 12px "Liberation Mono", monospace; color: #a0a0a0; }

/* document tabs */
.tabs {
  height: 35px;
  border-bottom: 2px solid #b0b0b0;
  border-left: 2px solid #909090;
  display: flex;
  align-items: flex-start;
  padding: 1px 3px 0 3px;
  box-shadow: inset 0 -3px #f0f0f0, inset 0 -4px #dcdcdc;
  font-family: "Liberation Sans", Arial, sans-serif;
}
.tab {
  height: 25px;
  margin-top: 3px;
  padding: 0 6px 0 9px;
  display: flex;
  align-items: center;
  border: 1px solid #dcdcdc;
  border-bottom: 0;
  font-size: 13px;
}
.tab.active { height: 29px; margin-top: 0; background: #fff; border-color: #fff; padding: 0 9px 3px 7px; }
.ico-bjt { width: 20px; height: 22px; margin-right: 5px; }
.ico-wave { width: 22px; height: 22px; margin-right: 7px; }

/* plot */
.plot {
  position: relative;
  flex: 1;
  background: #000;
  border-left: 2px solid #808080;
  border-right: 3px solid #e4e4e4;
}
#chart { position: relative; display: block; width: 100%; height: auto; font-family: "Liberation Sans", Arial, sans-serif; }
.grid path { stroke: #646464; stroke-dasharray: 4 3; shape-rendering: crispEdges; }
.axes path { stroke: #acacac; stroke-width: 4; }
.axes text { fill: #acacac; font-size: 17px; font-weight: 700; }
.cursor path { fill: none; stroke: #fff; stroke-dasharray: 4 3; shape-rendering: crispEdges; }
.mag { fill: none; stroke: #00f; stroke-width: 4; stroke-linejoin: round; }
.phase { fill: none; stroke: #00f; stroke-width: 1; stroke-dasharray: 4 3; shape-rendering: crispEdges; }
.legend-box { fill: #000; stroke: #fff; stroke-dasharray: 4 3; }
.legend { fill: #0f0; font-size: 17px; font-weight: 700; }
.ghost {
  position: absolute;
  left: 342px;
  top: 857px;
  width: 202px;
  height: 18px;
  padding-left: 34px;
  background: #0b1116;
  color: #000;
  line-height: 22px;
}

/* cursor readout window */
.dialog {
  position: absolute;
  left: 111px;
  top: 451px;
  width: 351px;
  height: 371px;
  background: #f0f0f0;
  font: 13px/16px "Liberation Sans", Arial, sans-serif;
}
.dialog header {
  height: 32px;
  display: flex;
  align-items: center;
  padding: 0 15px 0 4px;
  margin-bottom: 1px;
  background: #fff;
  color: #999;
  font: 14px/20px "Open Sans", "Noto Sans", sans-serif;
}
.dialog header h2 { font-size: 14px; }
.dialog header button { margin-left: auto; display: grid; }
.dialog header button svg { stroke: #888; }
.dialog fieldset {
  min-width: 0;
  margin: 0 1px 2px;
  padding: 0 0 0 5px;
  border: 1px solid #dcdcdc;
}
.dialog legend { padding: 0 4px; margin-left: 1px; line-height: 14px; }
.dialog p { width: 316px; height: 16px; margin-bottom: 6px; overflow: hidden; white-space: nowrap; }
.rows { display: grid; grid-template-columns: 33px 115px 54px 115px 26px; row-gap: 2px; align-items: center; }
.rows label { white-space: nowrap; }
.rows .r, .rows .wide { justify-self: end; padding-right: 9px; }
.rows .wide { grid-column: 1 / 4; }
.rows input { margin: 0; }
.rows input:not([type="radio"]) {
  width: 115px;
  height: 25px;
  padding: 0 3px;
  border: 2px solid #8c8c8c;
  background: #fff;
  color: #000;
  font: inherit;
}
.rows input.sunk:not([type="radio"]) { border-right-color: #e6e6e6; border-bottom-color: #e6e6e6; }
.rows input[type="radio"] {
  appearance: none;
  width: 15px;
  height: 15px;
  justify-self: center;
  border: 2px solid #555;
  border-radius: 50%;
  background: #fff;
}
.rows input[type="radio"]:checked { background: radial-gradient(#333 0 3px, #fff 4px); }
.rows input[type="radio"]:disabled { border: 1px solid #ccc; }
.dialog .ratio { margin: 5px 21px 0 1px; }
.ratio legend { margin: 0 4px 0 auto; }
.ratio .rows { grid-template-columns: 33px 115px 54px 115px; padding-top: 4px; }
.marks { position: absolute; left: 306px; top: 292px; width: 26px; height: 46px; fill: none; stroke: #f00; stroke-width: 2; }

/* status line */
.status { height: 27px; padding: 0 2px; border-top: 2px solid #fff; line-height: 29px; }

/* taskbar */
.taskbar {
  height: 50px;
  display: flex;
  align-items: center;
  background: linear-gradient(90deg, #0b0b09, #12100a 60%, #1f1109);
  color: #fff;
}
.taskbar > button { width: 62px; height: 50px; display: grid; place-items: center; }
.taskbar > .start { width: 60px; }
.taskbar > button svg { width: 28px; height: 28px; }
.taskbar .open { background: linear-gradient(#ffc6a5, #ffc6a5) center bottom / 51px 3px no-repeat; }
.taskbar .current { background: #424241; border-bottom: 3px solid #ffc6a5; padding-top: 3px; }
.desk { margin-left: 19px; }
.more { margin-left: 10px; align-self: flex-start; line-height: 20px; font-size: 20px; }
.tray { margin-left: auto; display: flex; align-items: center; height: 50px; padding-right: 14px; border-right: 1px solid #555; margin-right: 5px; }
.tray button { width: 30px; height: 50px; display: grid; place-items: center; }
.tray svg { width: 20px; height: 22px; }
.tray .people { width: 40px; margin-right: 10px; }
.lang { width: 46px; text-align: center; }
.clock { width: 84px; display: grid; text-align: center; line-height: 23px; }
.tray .action { width: 40px; margin-left: 5px; }
```
FILE: chart.js
```js
// Draws the logarithmic grid, the frame and the axis labels of the Bode plot.
const NS = "http://www.w3.org/2000/svg";
const left = 70.5, right = 1857, top_ = 151, bottom = 972;
const decade = (right - left) / 10, step = (bottom - top_) / 12;

function path(parent, d, width) {
  const p = document.createElementNS(NS, "path");
  p.setAttribute("d", d);
  if (width) p.style.strokeWidth = width;
  document.getElementById(parent).append(p);
}
function text(x, y, anchor, s) {
  const t = document.createElementNS(NS, "text");
  t.setAttribute("x", x);
  t.setAttribute("y", y);
  t.setAttribute("text-anchor", anchor);
  t.textContent = s;
  document.getElementById("axes").append(t);
}

const names = ["1Hz", "10Hz", "100Hz", "1KHz", "10KHz", "100KHz", "1MHz", "10MHz", "100MHz", "1GHz", "10GHz"];
names.forEach((name, i) => {
  const x0 = left + decade * i;
  path("axes", `M${x0} ${bottom}v11`);
  text(x0, 998, "middle", name);
  if (i === 10) return;
  for (let k = 1; k < 10; k++) {
    const x = Math.round(x0 + decade * Math.log10(k)) + 0.5;
    if (i + k > 1) path("grid", `M${x} 154V970`);
    if (k > 1) path("axes", `M${x} ${bottom}v6`, 3);
  }
});
for (let i = 0; i <= 12; i++) {
  const y = Math.round(top_ + step * i);
  if (i % 12) path("grid", `M74 ${y + 0.5}H1855`);
  path("axes", `M60 ${y}H70M1857 ${y}H1868`);
  text(59, y + 6, "end", `${80 - 20 * i}dB`);
  text(1909, y + 6, "end", `${60 - 60 * i}°`);
}
path("axes", `M${left} ${top_ - 2}V${bottom}M${right} ${top_ - 2}V${bottom}`, 3);
path("axes", `M60 ${top_}H1868M60 ${bottom}H1868`);
```
